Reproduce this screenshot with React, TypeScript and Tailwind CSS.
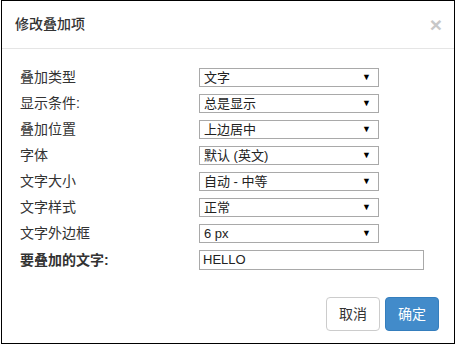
import React from 'react';

const FONT = '"Liberation Sans", "Noto Sans CJK SC", sans-serif';

const rows = [
    { label: '叠加类型', value: '文字' },
    { label: '显示条件:', value: '总是显示' },
    { label: '叠加位置', value: '上边居中' },
    { label: '字体', value: '默认 (英文)' },
    { label: '文字大小', value: '自动 - 中等' },
    { label: '文字样式', value: '正常' },
    { label: '文字外边框', value: '6 px' },
];

function FakeSelect({ value }: { value: string }) {
    return (
        <div className="w-[180px] h-[19px] border border-[#a9a9a9] bg-white flex items-center justify-between pl-[4px] pr-[7px] text-[13px] text-[#222] leading-none">
            <span>{value}</span>
            <span className="text-[9px] text-black">▼</span>
        </div>
    );
}

export default function App() {
    return (
        <div className="w-[456px] h-[347px] bg-white" style={{ fontFamily: FONT }}>
            <div className="ml-[1px] w-[454px] h-[344px] border border-black flex flex-col">
                {/* header */}
                <div className="h-[48px] shrink-0 border-b border-[#e5e5e5] flex items-center justify-between pl-[13px] pr-[12px]">
                    <h4 className="text-[14px] text-[#333] font-medium">修改叠加项</h4>
                    <span className="text-[21px] font-bold text-[#c8c8c8] leading-none">×</span>
                </div>

                {/* body */}
                <div className="pt-[19px] pl-[18px] flex flex-col gap-[7px]">
                    {rows.map((r) => (
                        <div key={r.label} className="flex items-center h-[19px]">
                            <span className="w-[179px] text-[14px] text-[#333]">{r.label}</span>
                            <FakeSelect value={r.value} />
                        </div>
                    ))}
                    <div className="flex items-center h-[20px]">
                        <span className="w-[179px] text-[14px] font-bold text-[#333]">要叠加的文字:</span>
                        <div className="w-[225px] h-[20px] border border-[#a9a9a9] flex items-center pl-[3px] text-[13px] text-[#222]">HELLO</div>
                    </div>
                </div>

                {/* footer */}
                <div className="mt-auto mb-[12px] flex justify-end gap-[5px] pr-[15px]">
                    <button className="w-[54px] h-[34px] rounded-[4px] border border-[#ccc] bg-white text-[14px] text-[#333]">取消</button>
                    <button className="w-[54px] h-[34px] rounded-[4px] border border-[#357ebd] bg-[#428bca] text-[14px] text-white">确定</button>
                </div>
            </div>
        </div>
    );
}
